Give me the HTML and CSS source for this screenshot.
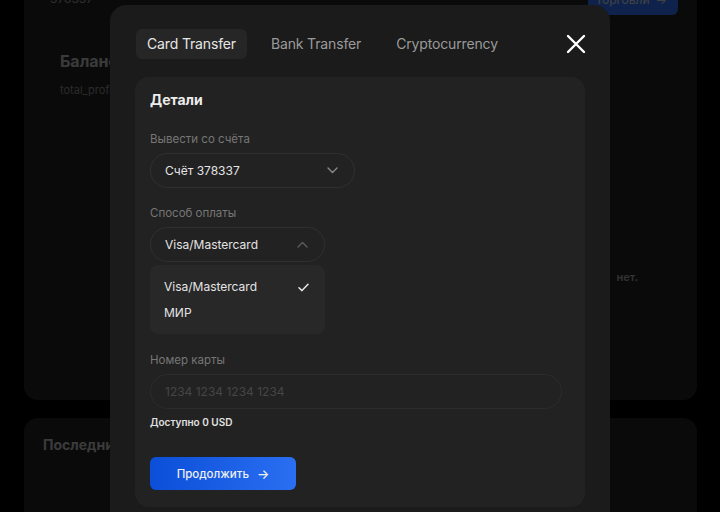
FILE: index.html
```html
<!DOCTYPE html>
<html lang="ru">
<head>
<meta charset="utf-8">
<title>Вывод средств</title>
<link rel="stylesheet" href="styles.css">
</head>
<body>
<div class="page">
  <section class="panel panel-top">
    <div class="acct-row">
      <span class="acct-num">378337</span>
      <span class="trade-btn">торговли <span class="arr">→</span></span>
    </div>
    <div class="balance">
      <h2 class="balance-title">Баланс</h2>
      <p class="balance-sub">total_profit</p>
    </div>
    <p class="empty-note">Открытых позиций нет.</p>
  </section>
  <section class="panel panel-bottom">
    <h2 class="recent-title">Последние операции</h2>
  </section>
</div>

<div class="overlay"></div>

<div class="modal">
  <div class="modal-head">
    <nav class="tabs">
      <span class="tab tab-active">Card Transfer</span>
      <span class="tab">Bank Transfer</span>
      <span class="tab">Cryptocurrency</span>
    </nav>
    <button class="close" aria-label="Закрыть">
      <svg width="20" height="20" viewBox="0 0 20 20"><path d="M2 2L18 18M18 2L2 18" stroke="#fff" stroke-width="2.4" stroke-linecap="round"/></svg>
    </button>
  </div>
  <div class="card">
    <h3 class="card-title">Детали</h3>

    <div class="field field-first">
      <label class="label">Вывести со счёта</label>
      <div class="select select-wide">
        <span>Счёт 378337</span>
        <svg class="chev" width="11" height="7" viewBox="0 0 11 7"><path d="M1 1L5.5 5.5L10 1" fill="none" stroke="#8a8a8a" stroke-width="1.4" stroke-linecap="round" stroke-linejoin="round"/></svg>
      </div>
    </div>

    <div class="field">
      <label class="label">Способ оплаты</label>
      <div class="select select-mid">
        <span>Visa/Mastercard</span>
        <svg class="chev" width="11" height="7" viewBox="0 0 11 7"><path d="M1 6L5.5 1.5L10 6" fill="none" stroke="#5c5c5c" stroke-width="1.4" stroke-linecap="round" stroke-linejoin="round"/></svg>
      </div>
    </div>

    <ul class="menu">
      <li class="menu-item">Visa/Mastercard
        <svg width="11" height="9" viewBox="0 0 11 9"><path d="M1 4.8L4 7.6L10 1.2" fill="none" stroke="#e6e6e6" stroke-width="1.5" stroke-linecap="round" stroke-linejoin="round"/></svg>
      </li>
      <li class="menu-item">МИР</li>
    </ul>

    <div class="field field-card">
      <label class="label">Номер карты</label>
      <div class="input"><span class="placeholder">1234 1234 1234 1234</span></div>
    </div>

    <p class="avail">Доступно 0 USD</p>

    <button class="submit">Продолжить <span class="submit-arr">→</span></button>
  </div>
</div>
</body>
</html>
```

FILE: styles.css
```css
* { box-sizing: border-box; }
html, body { margin: 0; padding: 0; }
body {
  display: flow-root;
  background: #000;
  font-family: "Inter", "Noto Sans", sans-serif;
  width: 720px;
  height: 512px;
  overflow: hidden;
  position: relative;
}
.page {
  padding: 0 23px 0 24px;
  display: flex;
  flex-direction: column;
  gap: 18px;
  margin-top: -40px;
}
.panel {
  background: #242424;
  border-radius: 14px;
}
.panel-top {
  height: 440px;
  padding: 29px 19px 0 26px;
  display: flex;
  flex-direction: column;
}
.acct-row {
  display: flex;
  justify-content: space-between;
  align-items: flex-start;
}
.acct-num {
  color: #a0a0a0;
  font-size: 12px;
  margin-top: 2px;
}
.trade-btn {
  background: #2f72ff;
  color: #e0e0e0;
  border-radius: 6px;
  font-size: 12px;
  white-space: nowrap;
  padding: 10px 11px 8px 9px;
  margin-top: -7px;
  display: flex;
  gap: 6px;
}
.balance { padding: 36px 0 0 10px; }
.balance-title {
  margin: 0;
  color: #c4c4c4;
  font-size: 16px;
  font-weight: 700;
}
.balance-sub {
  margin: 12px 0 0;
  color: #909090;
  font-size: 11px;
}
.empty-note {
  margin: 173px 40px 0 0;
  align-self: flex-end;
  font-size: 11px;
  font-weight: 600;
  word-spacing: 7px;
  color: #a8a8a8;
}
.panel-bottom {
  height: 120px;
  padding: 18px 19px;
}
.recent-title {
  margin: 0;
  color: #c4c4c4;
  font-size: 14px;
  font-weight: 700;
}

.overlay {
  position: fixed;
  top: 0;
  left: 0;
  right: 0;
  bottom: 0;
  background: rgba(0, 0, 0, 0.7);
}

.modal {
  position: absolute;
  left: 110px;
  top: 5px;
  width: 500px;
  height: 540px;
  background: #1b1b1b;
  border-radius: 16px;
  padding: 24px 25px 0 26px;
}
.modal-head {
  display: flex;
  align-items: center;
  justify-content: space-between;
  height: 30px;
}
.tabs { display: flex; gap: 13px; }
.tab {
  height: 30px;
  line-height: 30px;
  padding: 0 11px;
  border-radius: 6px;
  font-size: 14px;
  color: #9a9a9a;
  letter-spacing: -0.15px;
}
.tab-active {
  background: #262626;
  color: #e6e6e6;
}
.close {
  border: 0;
  background: none;
  padding: 0;
  width: 20px;
  height: 20px;
  margin-right: -1px;
  display: flex;
  cursor: pointer;
}
.card {
  margin-top: 18px;
  margin-left: -1px;
  background: #222222;
  border-radius: 14px;
  height: 430px;
  padding: 13px 15px 0;
}
.card-title {
  margin: 0;
  font-size: 14px;
  line-height: 20px;
  font-weight: 700;
  color: #ececec;
}
.field { display: flex; flex-direction: column; gap: 7px; margin-top: 18px; }
.field-first { margin-top: 22px; }
.field-card { margin-top: 19px; }
.label {
  font-size: 11.5px;
  line-height: 14px;
  color: #767676;
}
.select {
  height: 35px;
  border: 1px solid #303030;
  border-radius: 18px;
  display: flex;
  align-items: center;
  justify-content: space-between;
  padding: 0 16px 0 14px;
  font-size: 12px;
  color: #e4e4e4;
}
.select-wide { width: 205px; }
.select-mid { width: 175px; }
.menu {
  list-style: none;
  margin: 3px 0 0;
  width: 175px;
  background: #282828;
  border-radius: 8px;
  padding: 13px 16px 12px 14px;
  display: flex;
  flex-direction: column;
  gap: 8px;
}
.menu-item {
  height: 18px;
  line-height: 18px;
  font-size: 12px;
  color: #e4e4e4;
  display: flex;
  align-items: center;
  justify-content: space-between;
}
.input {
  width: 412px;
  height: 35px;
  border: 1px solid #2c2c2c;
  border-radius: 18px;
  display: flex;
  align-items: center;
  padding: 0 14px;
}
.placeholder {
  font-size: 12px;
  color: #464646;
}
.avail {
  margin: 6px 0 0;
  font-size: 10px;
  line-height: 14px;
  font-weight: 600;
  color: #e0e0e0;
}
.submit {
  margin-top: 28px;
  width: 146px;
  height: 33px;
  border: 0;
  border-radius: 6px;
  background: linear-gradient(90deg, #0b4ed8 0%, #2a6ff2 100%);
  color: #f0f0f0;
  font-family: inherit;
  font-size: 11.5px;
  font-weight: 500;
  display: flex;
  align-items: center;
  justify-content: center;
  gap: 8px;
  cursor: pointer;
}
.submit-arr { font-size: 13px; }
```
